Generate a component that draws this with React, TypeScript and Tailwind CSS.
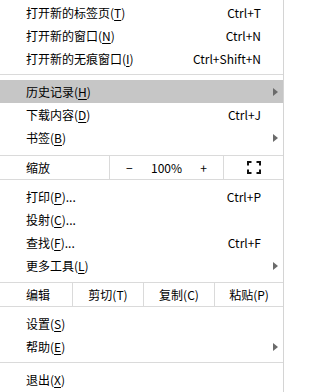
import React from "react";

const font = { fontFamily: '"Noto Sans CJK SC", "Noto Sans", sans-serif' };

function Arrow() {
  return (
    <svg width="5" height="8" viewBox="0 0 5 8" className="block">
      <path d="M0 0 L5 4 L0 8 Z" fill="#6b6b6b" />
    </svg>
  );
}

type ItemProps = {
  label: string;
  mn: string;
  suffix?: string;
  shortcut?: string;
  arrow?: boolean;
  active?: boolean;
};

function Item({ label, mn, suffix, shortcut, arrow, active }: ItemProps) {
  return (
    <div
      className={`flex h-[23px] items-center pl-[26px] pr-[22px] ${
        active ? "bg-[#c6c6c6]" : ""
      }`}
    >
      <span className="flex-1 whitespace-nowrap">
        {label}(<span className="underline underline-offset-[2px]">{mn}</span>)
        {suffix}
      </span>
      {shortcut && <span className="whitespace-nowrap">{shortcut}</span>}
      {arrow && (
        <span className="-mr-[23px] ml-auto flex w-[11px] justify-start">
          <Arrow />
        </span>
      )}
    </div>
  );
}

function Sep({ top, bottom }: { top: string; bottom: string }) {
  return <div className={`h-px bg-[#dadada] ${top} ${bottom}`} />;
}

function FullscreenIcon() {
  return (
    <svg width="14" height="13" viewBox="0 0 14 13" className="block">
      <path
        d="M1 4.5 V1 H4.5 M9.5 1 H13 V4.5 M13 8.5 V12 H9.5 M4.5 12 H1 V8.5"
        fill="none"
        stroke="#111"
        strokeWidth="2"
      />
    </svg>
  );
}

export default function App() {
  return (
    <div className="h-[392px] w-[286px] overflow-hidden bg-white text-[12px] text-black" style={font}>
      <div className="h-full w-[284px] border-r border-[#d4d4d4] pt-[1px]">
        <Item label="打开新的标签页" mn="T" shortcut="Ctrl+T" />
        <Item label="打开新的窗口" mn="N" shortcut="Ctrl+N" />
        <Item label="打开新的无痕窗口" mn="I" shortcut="Ctrl+Shift+N" />
        <Sep top="mt-[4px]" bottom="mb-[5px]" />
        <Item label="历史记录" mn="H" arrow active />
        <Item label="下载内容" mn="D" shortcut="Ctrl+J" />
        <Item label="书签" mn="B" arrow />
        <div className="mt-[6px] flex h-[25px] border-y border-[#dadada]">
          <div className="flex w-[109px] items-center pl-[26px]">缩放</div>
          <div className="flex w-[114px] items-center justify-between border-l border-[#dadada] px-[16px]">
            <span>−</span>
            <span>100%</span>
            <span>+</span>
          </div>
          <div className="flex flex-1 items-center justify-center border-l border-[#dadada]">
            <FullscreenIcon />
          </div>
        </div>
        <div className="h-[5px]" />
        <Item label="打印" mn="P" suffix="..." shortcut="Ctrl+P" />
        <Item label="投射" mn="C" suffix="..." />
        <Item label="查找" mn="F" suffix="..." shortcut="Ctrl+F" />
        <Item label="更多工具" mn="L" arrow />
        <div className="mt-[5px] flex h-[25px] border-y border-[#dadada]">
          <div className="flex w-[72px] items-center pl-[26px]">编辑</div>
          <div className="flex w-[71px] items-center justify-center border-l border-[#dadada]">剪切(T)</div>
          <div className="flex w-[71px] items-center justify-center border-l border-[#dadada]">复制(C)</div>
          <div className="flex flex-1 items-center justify-center border-l border-[#dadada]">粘贴(P)</div>
        </div>
        <div className="h-[5px]" />
        <Item label="设置" mn="S" />
        <Item label="帮助" mn="E" arrow />
        <Sep top="mt-[4px]" bottom="mb-[5px]" />
        <Item label="退出" mn="X" />
      </div>
    </div>
  );
}
